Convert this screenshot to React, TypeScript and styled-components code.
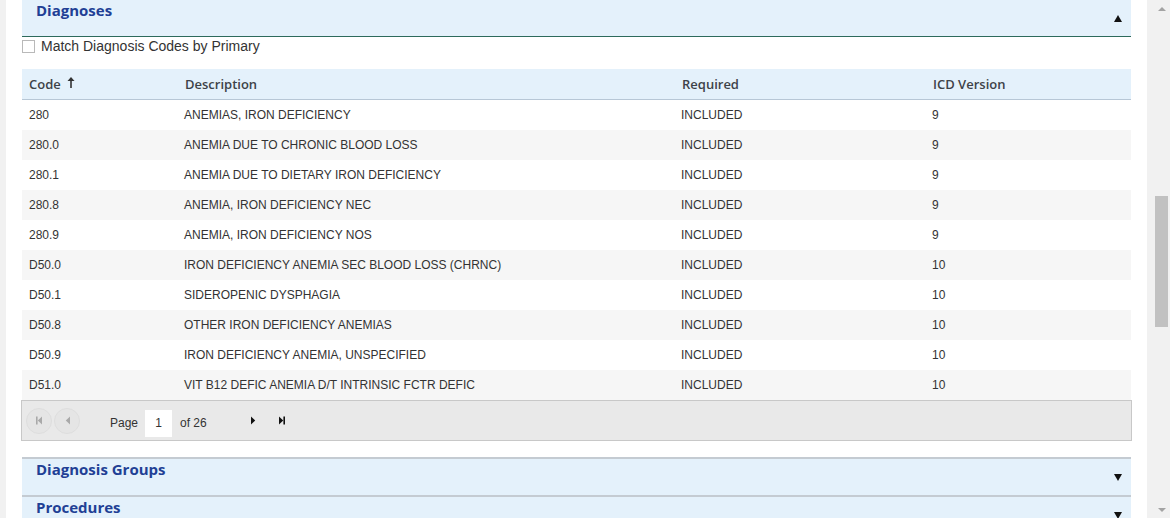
import React from "react";
import styled, { createGlobalStyle } from "styled-components";

const Global = createGlobalStyle`
  html, body { margin: 0; padding: 0; background: #fff; }
  body { font-family: "Liberation Sans", Arial, sans-serif; color: #333; overflow: hidden; }
  * { box-sizing: border-box; }
`;

const Page = styled.div`
  display: flex;
  width: 1170px;
  height: 518px;
  overflow: hidden;
`;

const SideStrip = styled.div`
  width: 6px;
  flex: none;
  background: #f1f1f1;
`;

const Main = styled.div`
  flex: 1;
  padding: 0 16px;
  margin-top: -2px;
  min-width: 0;
`;

const PanelHeader = styled.div<{ $open?: boolean }>`
  display: flex;
  justify-content: space-between;
  align-items: flex-start;
  height: ${(p) => (p.$open ? "39px" : "38px")};
  background: #e4f1fb;
  border-top: 2px solid #c4cbd2;
  border-bottom: ${(p) => (p.$open ? "1px solid #2d6a5c" : "none")};
  padding: 0 9px 0 14px;
`;

const PanelTitle = styled.div`
  font-family: "Open Sans", sans-serif;
  font-weight: 700;
  font-size: 15px;
  line-height: 20px;
  color: #213f95;
`;

const Caret = styled.div<{ $up?: boolean }>`
  width: 0;
  height: 0;
  margin-top: 15px;
  border-left: 4px solid transparent;
  border-right: 4px solid transparent;
  ${(p) => (p.$up ? "border-bottom: 7px solid #111;" : "border-top: 7px solid #111;")}
`;

const CheckRow = styled.label`
  display: flex;
  align-items: flex-start;
  height: 32px;
  padding-top: 3px;
  font-size: 14px;
  color: #333;
`;

const CheckBox = styled.span`
  width: 13px;
  height: 13px;
  border: 1px solid #b9b9b9;
  background: #fff;
  flex: none;
`;

const CheckLabel = styled.span`
  margin-left: 6px;
  line-height: 16px;
  margin-top: -2px;
`;

const Table = styled.div`
  display: flex;
  flex-direction: column;
`;

const cols = "156px 497px 251px 1fr";

const HeadRow = styled.div`
  display: grid;
  grid-template-columns: ${cols};
  height: 31px;
  background: #e4f1fb;
  border-bottom: 1px solid #b7c7d6;
  align-items: center;
`;

const HeadCell = styled.div`
  padding-left: 7px;
  font-family: "Open Sans", sans-serif;
  font-weight: 600;
  font-size: 13px;
  color: #3d4248;
  display: flex;
  align-items: center;
  gap: 6px;
`;

const SortArrow = styled.svg`
  width: 8px;
  height: 11px;
  margin-top: -3px;
`;

const Row = styled.div<{ $alt: boolean }>`
  display: grid;
  grid-template-columns: ${cols};
  height: 30px;
  align-items: center;
  background: ${(p) => (p.$alt ? "#f6f6f6" : "#fff")};
`;

const Cell = styled.div<{ $first?: boolean }>`
  padding-left: ${(p) => (p.$first ? "7px" : "6px")};
  font-size: 12px;
  color: #333;
  white-space: nowrap;
`;

const Pager = styled.div`
  display: flex;
  align-items: center;
  height: 41px;
  margin: 0 -1px 16px -1px;
  background: #e9e9e9;
  border: 1px solid #c8c8c8;
  padding-left: 4px;
  font-size: 12px;
  color: #333;
`;

const PagerBtn = styled.div<{ $disabled?: boolean }>`
  width: 26px;
  height: 26px;
  border-radius: 50%;
  display: flex;
  align-items: center;
  justify-content: center;
  margin-right: 2px;
  background: ${(p) => (p.$disabled ? "#e5e5e5" : "transparent")};
  border: 1px solid ${(p) => (p.$disabled ? "#dedede" : "transparent")};
  color: ${(p) => (p.$disabled ? "#a9a9a9" : "#111")};
`;

const PagerText = styled.span<{ $ml?: number }>`
  margin-left: ${(p) => p.$ml ?? 0}px;
  padding-top: 4px;
`;

const PageInput = styled.div`
  width: 27px;
  height: 27px;
  margin: 5px 8px 0 7px;
  background: #fff;
  display: flex;
  align-items: center;
  justify-content: center;
  font-size: 12px;
  color: #333;
`;

const NavGap = styled.div`
  width: 34px;
`;

const Scrollbar = styled.div`
  width: 17px;
  flex: none;
  background: #f1f1f1;
  display: flex;
  flex-direction: column;
  align-items: center;
`;

const ScrollArrow = styled.div<{ $up?: boolean }>`
  height: 17px;
  display: flex;
  align-items: center;
  justify-content: center;
  &::after {
    content: "";
    border-left: 4px solid transparent;
    border-right: 4px solid transparent;
    ${(p) => (p.$up ? "border-bottom: 4px solid #a3a3a3;" : "border-top: 4px solid #a3a3a3;")}
  }
`;

const Track = styled.div`
  flex: 1;
  width: 100%;
  display: flex;
  justify-content: center;
`;

const Thumb = styled.div`
  width: 13px;
  height: 131px;
  margin-top: 179px;
  background: #c1c1c1;
`;

const Icon = ({ kind }: { kind: "first" | "prev" | "next" | "last" }) => {
  const left = kind === "first" || kind === "prev";
  const tri = left ? "M7 0.5 L7 8.5 L2.8 4.5 Z" : "M2 0.5 L2 8.5 L6.2 4.5 Z";
  return (
    <svg width="9" height="9" viewBox="0 0 9 9" fill="currentColor">
      {kind === "first" && <rect x="1" y="0.5" width="1.6" height="8" />}
      {kind === "last" && <rect x="6.4" y="0.5" width="1.6" height="8" />}
      <path d={tri} />
    </svg>
  );
};

const rows: [string, string, string, string][] = [
  ["280", "ANEMIAS, IRON DEFICIENCY", "INCLUDED", "9"],
  ["280.0", "ANEMIA DUE TO CHRONIC BLOOD LOSS", "INCLUDED", "9"],
  ["280.1", "ANEMIA DUE TO DIETARY IRON DEFICIENCY", "INCLUDED", "9"],
  ["280.8", "ANEMIA, IRON DEFICIENCY NEC", "INCLUDED", "9"],
  ["280.9", "ANEMIA, IRON DEFICIENCY NOS", "INCLUDED", "9"],
  ["D50.0", "IRON DEFICIENCY ANEMIA SEC BLOOD LOSS (CHRNC)", "INCLUDED", "10"],
  ["D50.1", "SIDEROPENIC DYSPHAGIA", "INCLUDED", "10"],
  ["D50.8", "OTHER IRON DEFICIENCY ANEMIAS", "INCLUDED", "10"],
  ["D50.9", "IRON DEFICIENCY ANEMIA, UNSPECIFIED", "INCLUDED", "10"],
  ["D51.0", "VIT B12 DEFIC ANEMIA D/T INTRINSIC FCTR DEFIC", "INCLUDED", "10"],
];

export default function App() {
  return (
    <>
      <Global />
      <Page>
        <SideStrip />
        <Main>
          <PanelHeader $open>
            <PanelTitle>Diagnoses</PanelTitle>
            <Caret $up />
          </PanelHeader>
          <CheckRow>
            <CheckBox />
            <CheckLabel>Match Diagnosis Codes by Primary</CheckLabel>
          </CheckRow>
          <Table>
            <HeadRow>
              <HeadCell>
                Code
                <SortArrow viewBox="0 0 8 11">
                  <path d="M4 0 L7.5 4 L4.8 4 L4.8 11 L3.2 11 L3.2 4 L0.5 4 Z" fill="#333" />
                </SortArrow>
              </HeadCell>
              <HeadCell>Description</HeadCell>
              <HeadCell>Required</HeadCell>
              <HeadCell>ICD Version</HeadCell>
            </HeadRow>
            {rows.map((r, i) => (
              <Row key={r[0]} $alt={i % 2 === 1}>
                <Cell $first>{r[0]}</Cell>
                <Cell>{r[1]}</Cell>
                <Cell>{r[2]}</Cell>
                <Cell>{r[3]}</Cell>
              </Row>
            ))}
          </Table>
          <Pager>
            <PagerBtn $disabled>
              <Icon kind="first" />
            </PagerBtn>
            <PagerBtn $disabled>
              <Icon kind="prev" />
            </PagerBtn>
            <PagerText $ml={28}>Page</PagerText>
            <PageInput>1</PageInput>
            <PagerText>of 26</PagerText>
            <NavGap />
            <PagerBtn>
              <Icon kind="next" />
            </PagerBtn>
            <PagerBtn>
              <Icon kind="last" />
            </PagerBtn>
          </Pager>
          <PanelHeader>
            <PanelTitle>Diagnosis Groups</PanelTitle>
            <Caret />
          </PanelHeader>
          <PanelHeader>
            <PanelTitle>Procedures</PanelTitle>
            <Caret />
          </PanelHeader>
        </Main>
        <SideStrip />
        <Scrollbar>
          <ScrollArrow $up />
          <Track>
            <Thumb />
          </Track>
          <ScrollArrow />
        </Scrollbar>
      </Page>
    </>
  );
}
